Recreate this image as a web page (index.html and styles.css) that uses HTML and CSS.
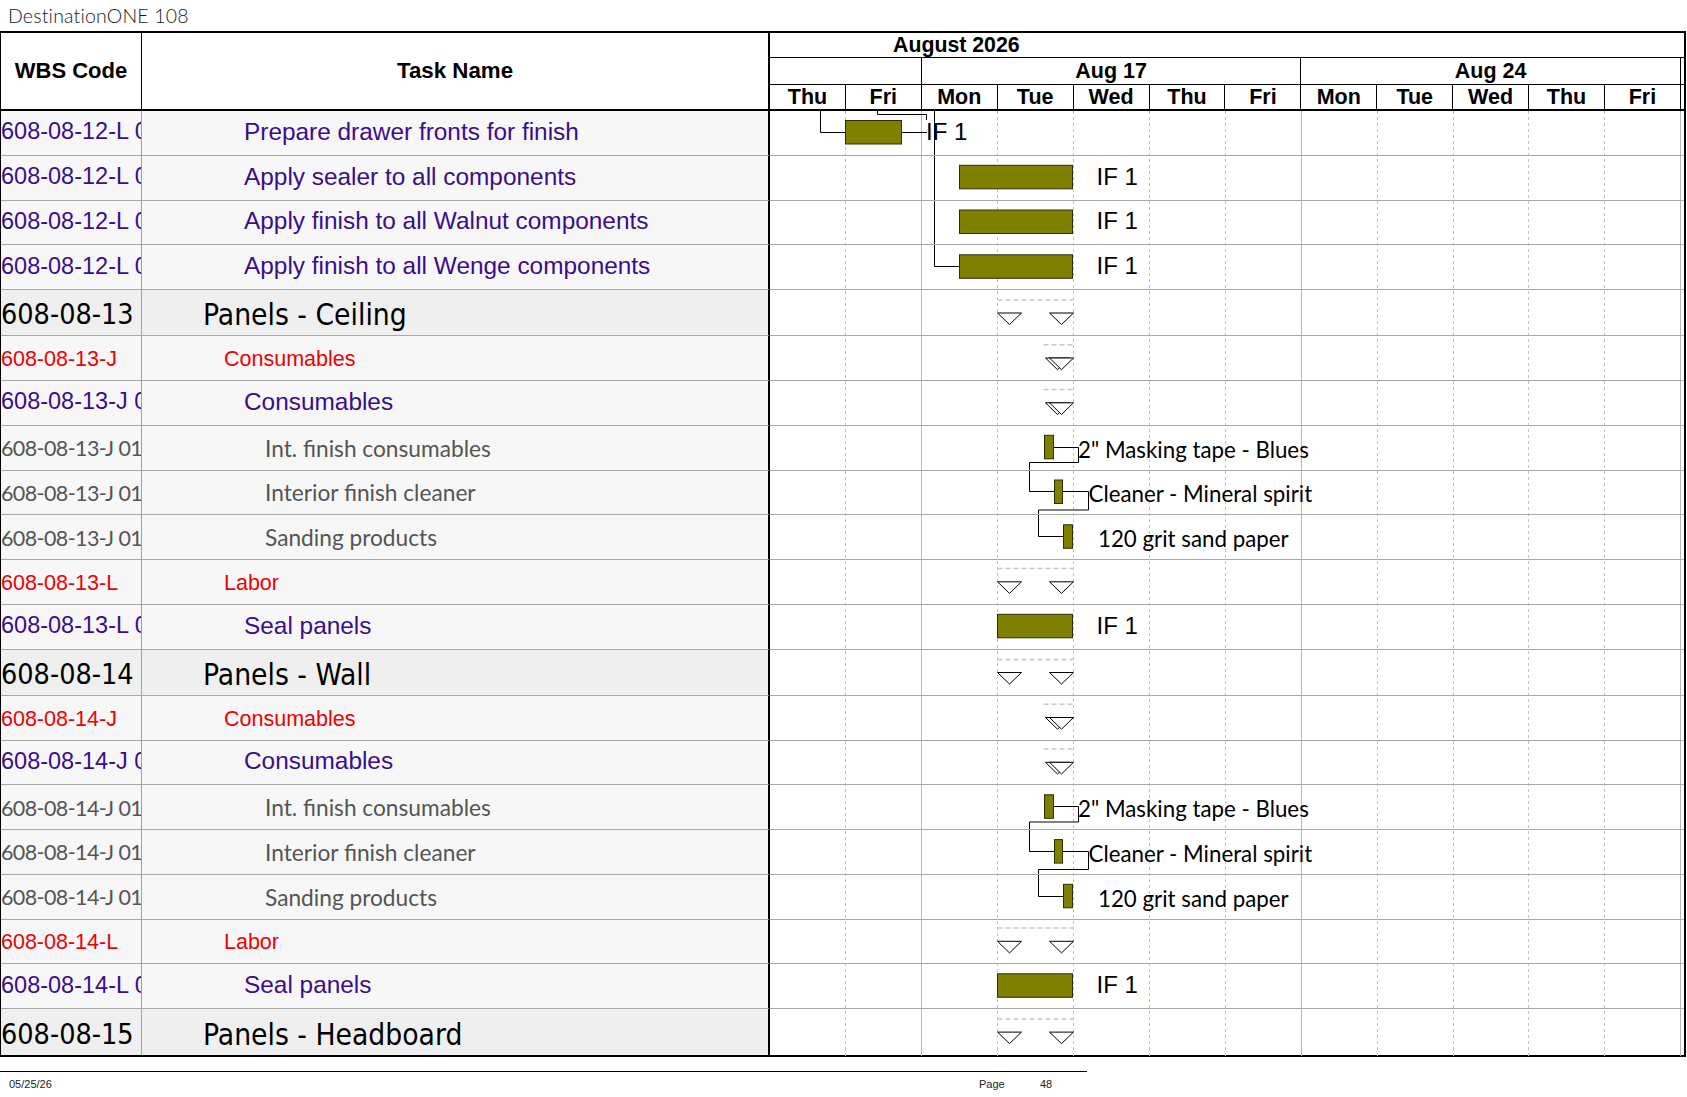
FILE: index.html
```html
<!DOCTYPE html>
<html lang="en">
<head>
<meta charset="utf-8">
<title>DestinationONE 108</title>
<link rel="stylesheet" href="styles.css">
</head>
<body>
<div class="title">DestinationONE 108</div>
<div class="sheet">
  <div class="hdr">
    <div class="h-wbs">WBS Code</div>
    <div class="h-task">Task Name</div>
    <div class="h-chart">
      <div class="h-month">August 2026</div>
      <div class="h-weeks">
        <div class="wk"></div>
        <div class="wk">Aug 17</div>
        <div class="wk">Aug 24</div>
        <div class="wk end"></div>
      </div>
      <div class="h-days">
        <div class="dy">Thu</div><div class="dy">Fri</div><div class="dy">Mon</div><div class="dy">Tue</div><div class="dy">Wed</div><div class="dy">Thu</div><div class="dy">Fri</div><div class="dy">Mon</div><div class="dy">Tue</div><div class="dy">Wed</div><div class="dy">Thu</div><div class="dy">Fri</div><div class="dy end"></div>
      </div>
    </div>
  </div>

  <div class="body">
    <svg class="gantt" width="914" height="945" xmlns="http://www.w3.org/2000/svg">
      <g class="grid-dash">
        <line x1="75.5" y1="0" x2="75.5" y2="945"/>
        <line x1="227.5" y1="0" x2="227.5" y2="945"/>
        <line x1="303.5" y1="0" x2="303.5" y2="945"/>
        <line x1="379.5" y1="0" x2="379.5" y2="945"/>
        <line x1="455.5" y1="0" x2="455.5" y2="945"/>
        <line x1="607.5" y1="0" x2="607.5" y2="945"/>
        <line x1="683.5" y1="0" x2="683.5" y2="945"/>
        <line x1="758.5" y1="0" x2="758.5" y2="945"/>
        <line x1="834.5" y1="0" x2="834.5" y2="945"/>
      </g>
      <g class="grid-solid">
        <line x1="151.5" y1="0" x2="151.5" y2="945"/>
        <line x1="531.5" y1="0" x2="531.5" y2="945"/>
        <line x1="910.5" y1="0" x2="910.5" y2="945"/>
      </g>

      <g class="sum-line">
        <line x1="227.5" y1="189" x2="303.5" y2="189"/>
        <line x1="273.5" y1="233.8" x2="303.5" y2="233.8"/>
        <line x1="273.5" y1="278.5" x2="303.5" y2="278.5"/>
        <line x1="227.5" y1="457.5" x2="303.5" y2="457.5"/>
        <line x1="227.5" y1="548.5" x2="303.5" y2="548.5"/>
        <line x1="273.5" y1="593.3" x2="303.5" y2="593.3"/>
        <line x1="273.5" y1="638.1" x2="303.5" y2="638.1"/>
        <line x1="227.5" y1="817.1" x2="303.5" y2="817.1"/>
        <line x1="227.5" y1="908.1" x2="303.5" y2="908.1"/>
      </g>

      <g class="tri">
        <polygon points="227.5,202 251.5,202 239.5,213.5"/>
        <polygon points="279.5,202 303.5,202 291.5,213.5"/>
        <polygon points="275.5,247 299.5,247 287.5,258.7"/>
        <polygon points="279.5,247 303.5,247 291.5,258.7"/>
        <polygon points="275.5,291.8 299.5,291.8 287.5,303.5"/>
        <polygon points="279.5,291.8 303.5,291.8 291.5,303.5"/>
        <polygon points="227.5,470.8 251.5,470.8 239.5,482.4"/>
        <polygon points="279.5,470.8 303.5,470.8 291.5,482.4"/>
        <polygon points="227.5,561.5 251.5,561.5 239.5,573"/>
        <polygon points="279.5,561.5 303.5,561.5 291.5,573"/>
        <polygon points="275.5,606.5 299.5,606.5 287.5,618.2"/>
        <polygon points="279.5,606.5 303.5,606.5 291.5,618.2"/>
        <polygon points="275.5,651.3 299.5,651.3 287.5,663"/>
        <polygon points="279.5,651.3 303.5,651.3 291.5,663"/>
        <polygon points="227.5,830.3 251.5,830.3 239.5,841.9"/>
        <polygon points="279.5,830.3 303.5,830.3 291.5,841.9"/>
        <polygon points="227.5,921.1 251.5,921.1 239.5,932.6"/>
        <polygon points="279.5,921.1 303.5,921.1 291.5,932.6"/>
      </g>

      <g class="link">
        <path d="M50.5 0 V21.5 H75.5"/>
        <path d="M107.5 0 V3.5 H156.5 V9"/>
        <path d="M131.5 21.5 H157"/>
        <path d="M164.5 0 V155.5 H189.5"/>
        <path d="M283.5 336.5 H308.5 V351.5 H259.5 V380.5 H284.5"/>
        <path d="M292.5 380.5 H318.5 V399 H268.5 V425.5 H293.5"/>
        <path d="M283.5 695.5 H308.5 V711 H259.5 V740.5 H284.5"/>
        <path d="M292.5 740.5 H318.5 V758.5 H268.5 V785.5 H293.5"/>
      </g>

      <g class="bar">
        <rect x="75.5" y="9.5" width="56" height="23.5"/>
        <rect x="189.5" y="54.3" width="113" height="23.5"/>
        <rect x="189.5" y="99" width="113" height="23.5"/>
        <rect x="189.5" y="143.8" width="113" height="23.5"/>
        <rect x="274.5" y="324.3" width="9" height="23.5"/>
        <rect x="284.5" y="369" width="8" height="23.5"/>
        <rect x="293.5" y="413.8" width="9" height="23.5"/>
        <rect x="227.5" y="503.3" width="75" height="23.5"/>
        <rect x="274.5" y="683.8" width="9" height="23.5"/>
        <rect x="284.5" y="728.6" width="8" height="23.5"/>
        <rect x="293.5" y="773.3" width="9" height="23.5"/>
        <rect x="227.5" y="862.8" width="75" height="23.5"/>
      </g>
    </svg>

    <div class="row lv3"><div class="wbs">608-08-12-L 01</div><div class="task">Prepare drawer fronts for finish</div><div class="chart"><span class="if" style="margin-left:156px">IF 1</span></div></div>
    <div class="row lv3"><div class="wbs">608-08-12-L 02</div><div class="task">Apply sealer to all components</div><div class="chart"><span class="if" style="margin-left:326.5px">IF 1</span></div></div>
    <div class="row lv3"><div class="wbs">608-08-12-L 03</div><div class="task">Apply finish to all Walnut components</div><div class="chart"><span class="if" style="margin-left:326.5px">IF 1</span></div></div>
    <div class="row lv3"><div class="wbs">608-08-12-L 04</div><div class="task">Apply finish to all Wenge components</div><div class="chart"><span class="if" style="margin-left:326.5px">IF 1</span></div></div>
    <div class="row lv1"><div class="wbs">608-08-13</div><div class="task">Panels - Ceiling</div><div class="chart"></div></div>
    <div class="row lv2"><div class="wbs">608-08-13-J</div><div class="task">Consumables</div><div class="chart"></div></div>
    <div class="row lv3"><div class="wbs">608-08-13-J 01</div><div class="task">Consumables</div><div class="chart"></div></div>
    <div class="row lv4"><div class="wbs">608-08-13-J 01 01</div><div class="task">Int. finish consumables</div><div class="chart"><span class="res" style="margin-left:308px">2" Masking tape - Blues</span></div></div>
    <div class="row lv4"><div class="wbs">608-08-13-J 01 02</div><div class="task">Interior finish cleaner</div><div class="chart"><span class="res" style="margin-left:318.5px">Cleaner - Mineral spirit</span></div></div>
    <div class="row lv4"><div class="wbs">608-08-13-J 01 03</div><div class="task">Sanding products</div><div class="chart"><span class="res" style="margin-left:328px">120 grit sand paper</span></div></div>
    <div class="row lv2"><div class="wbs">608-08-13-L</div><div class="task">Labor</div><div class="chart"></div></div>
    <div class="row lv3"><div class="wbs">608-08-13-L 01</div><div class="task">Seal panels</div><div class="chart"><span class="if" style="margin-left:326.5px">IF 1</span></div></div>
    <div class="row lv1"><div class="wbs">608-08-14</div><div class="task">Panels - Wall</div><div class="chart"></div></div>
    <div class="row lv2"><div class="wbs">608-08-14-J</div><div class="task">Consumables</div><div class="chart"></div></div>
    <div class="row lv3"><div class="wbs">608-08-14-J 01</div><div class="task">Consumables</div><div class="chart"></div></div>
    <div class="row lv4"><div class="wbs">608-08-14-J 01 01</div><div class="task">Int. finish consumables</div><div class="chart"><span class="res" style="margin-left:308px">2" Masking tape - Blues</span></div></div>
    <div class="row lv4"><div class="wbs">608-08-14-J 01 02</div><div class="task">Interior finish cleaner</div><div class="chart"><span class="res" style="margin-left:318.5px">Cleaner - Mineral spirit</span></div></div>
    <div class="row lv4"><div class="wbs">608-08-14-J 01 03</div><div class="task">Sanding products</div><div class="chart"><span class="res" style="margin-left:328px">120 grit sand paper</span></div></div>
    <div class="row lv2"><div class="wbs">608-08-14-L</div><div class="task">Labor</div><div class="chart"></div></div>
    <div class="row lv3"><div class="wbs">608-08-14-L 01</div><div class="task">Seal panels</div><div class="chart"><span class="if" style="margin-left:326.5px">IF 1</span></div></div>
    <div class="row lv1"><div class="wbs">608-08-15</div><div class="task">Panels - Headboard</div><div class="chart"></div></div>
  </div>
</div>
<div class="footer">
  <span class="f-date">05/25/26</span>
  <span class="f-page">Page</span>
  <span class="f-num">48</span>
</div>
</body>
</html>
```

FILE: styles.css
```css
* { box-sizing: border-box; }

html, body {
  margin: 0;
  padding: 0;
  background: #fff;
}

body {
  width: 1687px;
  height: 1097px;
  overflow: hidden;
  font-family: "Liberation Sans", Arial, sans-serif;
  color: #000;
}

.title {
  height: 31px;
  line-height: 31px;
  padding-left: 8px;
  font-family: Lato, "Open Sans", sans-serif;
  font-weight: 300;
  font-size: 19.5px;
  letter-spacing: 0.2px;
  color: #1a1a1a;
}

.sheet {
  width: 1686px;
  border-top: 2px solid #000;
  border-left: 1px solid #000;
  border-right: 2px solid #000;
  border-bottom: 2px solid #000;
}

/* ---------- header ---------- */
.hdr {
  display: flex;
  height: 78px;
  border-bottom: 2px solid #000;
  font-weight: bold;
  font-size: 21.5px;
}

.h-wbs {
  width: 141px;
  flex: none;
  border-right: 1px solid #000;
  display: flex;
  align-items: center;
  justify-content: center;
  font-size: 22px;
}

.h-task {
  width: 628px;
  flex: none;
  border-right: 2px solid #000;
  display: flex;
  align-items: center;
  justify-content: center;
  font-size: 22.3px;
}

.h-chart {
  flex: 1;
  display: flex;
  flex-direction: column;
}

.h-month {
  height: 25px;
  border-bottom: 1px solid #000;
  padding-left: 123px;
  line-height: 24px;
  font-size: 21.3px;
}

.h-weeks {
  height: 27px;
  border-bottom: 1px solid #000;
  display: grid;
  grid-template-columns: 151.82px 379.55px 379.55px 1fr;
}

.wk {
  border-right: 1px solid #000;
  text-align: center;
  line-height: 26px;
}

.h-days {
  flex: 1;
  display: grid;
  grid-template-columns: repeat(12, 75.91px) 1fr;
}

.dy {
  border-right: 1px solid #000;
  text-align: center;
  line-height: 25px;
}

.wk.end, .dy.end { border-right: none; }

/* ---------- body ---------- */
.body {
  position: relative;
}

.gantt {
  position: absolute;
  left: 769px;
  top: 0;
  z-index: 0;
  overflow: visible;
}

.grid-dash line {
  stroke: #c2c2c2;
  stroke-width: 1;
  stroke-dasharray: 3 3;
}

.grid-solid line {
  stroke: #b8b8b8;
  stroke-width: 1;
}

.sum-line line {
  stroke: #c8c8c8;
  stroke-width: 1.5;
  stroke-dasharray: 5 3;
}

.tri polygon {
  fill: #fff;
  stroke: #000;
  stroke-width: 1;
}

.link path {
  fill: none;
  stroke: #000;
  stroke-width: 1;
}

.bar rect {
  fill: #808000;
  stroke: #2e2e06;
  stroke-width: 1;
}

.row {
  position: relative;
  z-index: 1;
  display: flex;
  height: 44.75px;
  white-space: nowrap;
}

.row.lv1 { height: 46.3px; }

.wbs, .task, .chart {
  border-bottom: 1px solid #a9a9a9;
  display: flex;
  align-items: center;
}

.row:last-child .wbs,
.row:last-child .task,
.row:last-child .chart { border-bottom: none; }

.wbs {
  width: 141px;
  flex: none;
  overflow: hidden;
  border-right: 1px solid #a0a0a0;
  background: #f7f7f7;
}

.task {
  width: 628px;
  flex: none;
  overflow: hidden;
  border-right: 2px solid #000;
  background: #f7f7f7;
}

.chart {
  flex: 1;
  background: transparent;
}

/* level 1: group rows */
.lv1 .wbs, .lv1 .task {
  background: #efefef;
  font-family: "DejaVu Sans Condensed", "DejaVu Sans", sans-serif;
  font-stretch: condensed;
  font-size: 28.5px;
  color: #000;
  padding-top: 4px;
}
.lv1 .task {
  padding-left: 61px;
  font-size: 29.7px;
}

/* level 2: red rows */
.lv2 .wbs, .lv2 .task {
  font-size: 21.5px;
  color: #f00000;
  padding-top: 3px;
}
.lv2 .task { padding-left: 82px; }

/* level 3: purple rows */
.lv3 .wbs, .lv3 .task {
  font-size: 23.5px;
  color: #3b0d8c;
  padding-bottom: 2px;
}
.lv3 .task {
  padding-left: 102px;
  font-size: 24.4px;
}

/* level 4: detail rows */
.lv4 .wbs, .lv4 .task {
  font-family: Lato, "Open Sans", sans-serif;
  color: #555;
  padding-top: 1px;
}
.lv4 .wbs {
  font-size: 21.5px;
  letter-spacing: -0.6px;
}
.lv4 .task {
  padding-left: 123px;
  font-size: 22.7px;
}

.if {
  font-family: "Liberation Sans", Arial, sans-serif;
  font-size: 24px;
  color: #000;
  padding-bottom: 2px;
}

.res {
  font-family: Lato, "Open Sans", sans-serif;
  font-size: 22.3px;
  color: #000;
  padding-top: 3px;
}

/* ---------- footer ---------- */
.footer {
  width: 1087px;
  margin-top: 14px;
  border-top: 1px solid #000;
  display: flex;
  padding-top: 5px;
  font-size: 11px;
  line-height: 14px;
  color: #222;
}

.f-date {
  width: 979px;
  padding-left: 9px;
}

.f-page {
  width: 61px;
}
```
